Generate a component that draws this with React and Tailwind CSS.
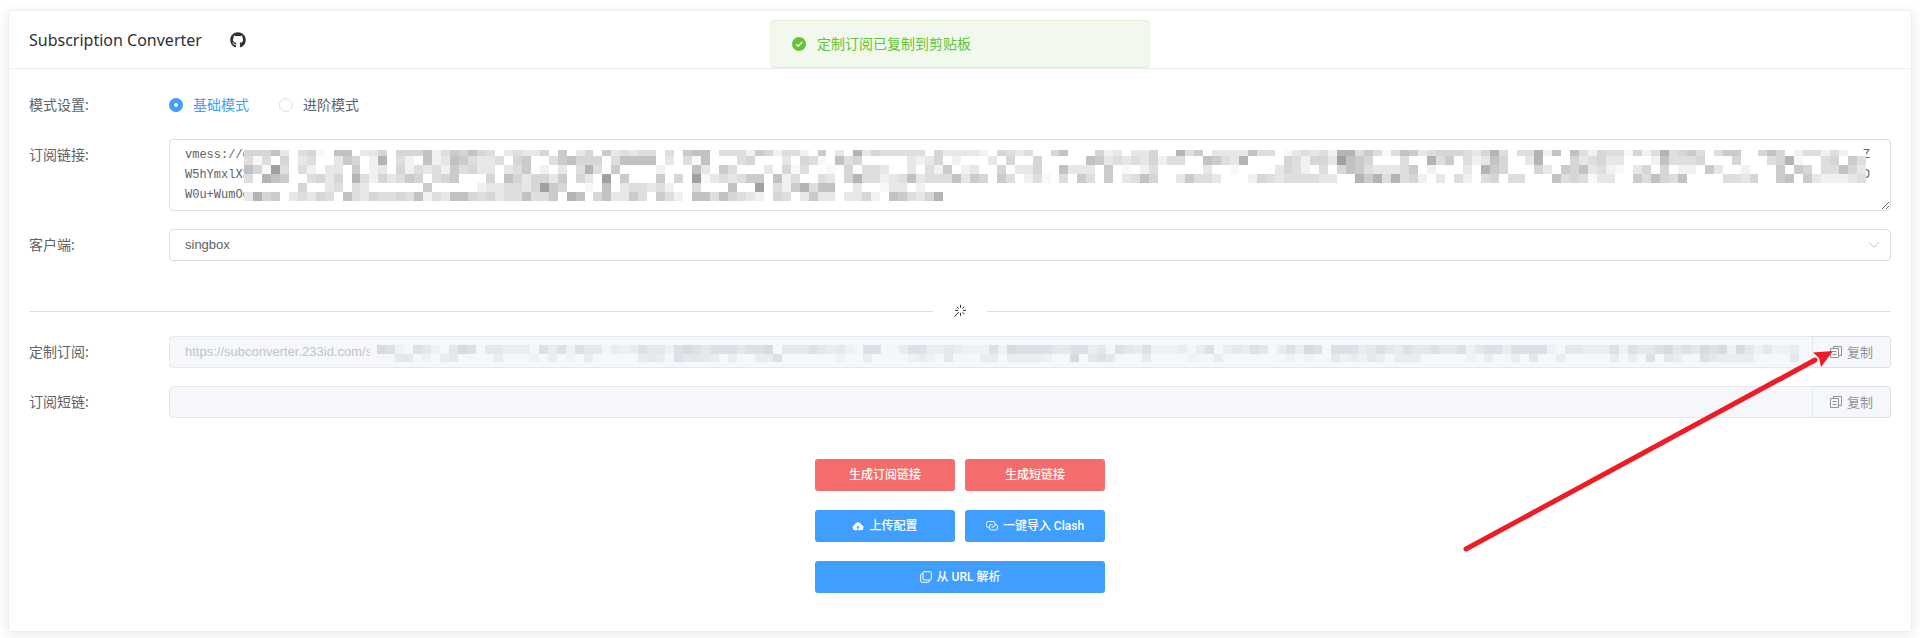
import { useState } from 'react';
import { FaGithub } from 'react-icons/fa';

// Each digit is the darkness of one mosaic cell, 0 is empty
const linkMosaic = [
  '55573045107703350555724657540343350603506343440406770' +
    '44426524420603083544444053333205434005700052303350084603333744013' +
    '434288464147634555435840448270742544152484564046600575024424200',
  '41405034003650280420723764334056004675550477770304170' +
    '00450003054107450000032350200030500500000763434352440076438000054' +
    '255397650004008460423750038000534533000274445000500045810045064',
  '75194042033060230524342645330346020304840600002000730' +
    '64000305140010504430030426023005033500733306010240000030010000354' +
    '204057643334602000308650005306573421035050220630020006065044753',
  '40876004535084253465045600050753553605309060006050913' +
    '43466072400430584423473444736506402410406406034750036443000254344' +
    '443300868484520304204504400074541330064754700004435006706322234',
  '00000050034043000000600000233443596500107034434200400' +
    '07009042684770030013302',
  '38560343540743544547243775453447446087057336406420774' +
    '75432054036330335207643580',
];

const subMosaic = [
  '65205420465044333053525441323544256545554556044454342155103553343222526555544553415' +
    '435222313503435403536505553454354454452455355552044333525445645465626424223',
  '00440203400003000203020300000343054443030033500000020030000232040103303333200604540' +
    '003000021030000001202014232430333000002030030400300000303050431054333310004',
];

const greys = ['', '#f8f8f8', '#f1f1f2', '#e6e7e7', '#dedede', '#d5d6d8', '#cbcbcd', '#c1c2c4', '#b3b4b6', '#9f9fa4'];
const blues = ['', '#f3f6fa', '#eef2f6', '#e9ecf0', '#e4e7eb', '#dde0e8', '#d9dade'];

function Mosaic({ rows, tops, colors, columns, height, background, className }) {
  return (
    <svg
      viewBox={`0 0 ${columns * 9} ${height}`}
      preserveAspectRatio="none"
      shapeRendering="crispEdges"
      aria-hidden="true"
      className={className}
    >
      <rect width={columns * 9} height={height} fill={background} />
      {rows.map((row, r) =>
        row.split('').map((level, c) =>
          level === '0' ? null : (
            <rect key={`${r}-${c}`} x={c * 9} y={tops[r]} width="9" height={tops[r + 1] - tops[r]} fill={colors[level]} />
          )
        )
      )}
    </svg>
  );
}

function StickIcon() {
  return (
    <svg viewBox="0 0 14 14" className="h-3.5 w-3.5" fill="none" stroke="#303133" strokeWidth="1" strokeLinecap="round" aria-hidden="true">
      <path d="M7.500 1.200v2.200M7.500 9.200v2.300M2.600 6.400h2.200M10.300 6.400h2.300M4 3l1.400 1.300M11 3L9.700 4.300M11 9.800L9.700 8.500M5.400 8.400L1.600 12.400" />
    </svg>
  );
}

function DocumentCopyIcon() {
  return (
    <svg viewBox="0 0 12 12" className="h-3 w-3" fill="none" stroke="currentColor" strokeWidth="1" aria-hidden="true">
      <path d="M.5 2.5h8v9h-8zM3.5 2.5v-2h8v9h-3M2.5 5.5h4M2.5 8.5h4" />
    </svg>
  );
}

function CloudIcon() {
  return (
    <svg viewBox="0 0 12 12" className="h-3 w-3" aria-hidden="true">
      <path fill="currentColor" d="M3 10.3A2.7 2.7 0 0 1 2.5 5 3.7 3.7 0 0 1 9.6 5 2.7 2.7 0 0 1 9 10.3z" />
      <path fill="none" stroke="#409eff" strokeWidth="1" d="M6 10.3V6.4M4.5 7.6L6 6.2l1.5 1.4" />
    </svg>
  );
}

function ConnectionIcon() {
  return (
    <svg viewBox="0 0 12 12" className="h-3 w-3" fill="none" stroke="currentColor" strokeWidth="1" aria-hidden="true">
      <path d="M2.500 7.500A2 2 0 0 1 .5 5.500V3.500a2 2 0 0 1 2-2h4.500a2 2 0 0 1 2 2v1.500a2 2 0 0 1-2 2H5.500" />
      <path d="M9.500 4.500a2 2 0 0 1 2 2v1.500a2 2 0 0 1-2 2H5.300a2 2 0 0 1-2-2V6.500a2 2 0 0 1 2-2H6.500" />
    </svg>
  );
}

function CopyIcon() {
  return (
    <svg viewBox="0 0 12 12" className="h-3 w-3" fill="none" stroke="currentColor" strokeWidth="1" aria-hidden="true">
      <rect x="3" y=".7" width="8.3" height="8.3" rx="1" />
      <path d="M3 2.8H1.7a1 1 0 0 0-1 1v6.500a1 1 0 0 0 1 1h6.500a1 1 0 0 0 1-1V9" />
    </svg>
  );
}

function FormItem({ label, htmlFor, children }) {
  return (
    <div className="flex">
      <label htmlFor={htmlFor} className="w-35 shrink-0 leading-8">
        {label}
      </label>
      <div className="relative min-w-0 flex-1">{children}</div>
    </div>
  );
}

function ModeRadio({ value, mode, onChange, children }) {
  const checked = mode === value;
  return (
    <label className={`flex items-center gap-2.5 ${checked ? 'text-[#409eff]' : 'text-[#606266]'}`}>
      <input
        type="radio"
        name="mode"
        value={value}
        checked={checked}
        onChange={() => onChange(value)}
        className="h-3.5 w-3.5 appearance-none rounded-full border border-[#dcdfe6] bg-white checked:border-5 checked:border-[#409eff]"
      />
      {children}
    </label>
  );
}

function CopyField({ id, value, children }) {
  return (
    <div className="flex h-8">
      <input
        id={id}
        value={value}
        disabled
        className="min-w-0 flex-1 rounded-l border border-[#e4e7ed] bg-[#f5f7fa] px-[15px] font-['Liberation_Sans','Noto_Sans_CJK_SC',sans-serif] text-[13px] text-[#c0c4cc]"
      />
      {children}
      <button
        type="button"
        className="flex w-[78px] items-center justify-center gap-[5px] rounded-r border border-l-0 border-[#dcdfe6] bg-[#f5f7fa] text-[13px] text-[#909399]"
      >
        <DocumentCopyIcon />
        复制
      </button>
    </div>
  );
}

function ActionButton({ className, children }) {
  return (
    <button
      type="button"
      className={`flex h-8 items-center justify-center gap-[5px] rounded-[3px] font-['Roboto','Noto_Sans_CJK_SC',sans-serif] text-xs font-medium text-white ${className}`}
    >
      {children}
    </button>
  );
}

export default function App() {
  const [mode, setMode] = useState('basic');
  const [client, setClient] = useState('singbox');

  const links = [
    'vmess://e'.padEnd(233) + 'Z',
    'W5hYmxlX3'.padEnd(233) + 'D',
    'W0u+WumOe',
  ].join('\n');

  return (
    <div className="bg-white px-2 pt-2.5 pb-1.5 font-['Noto_Sans','Noto_Sans_CJK_SC',sans-serif] text-sm text-[#606266]">
      {/* Message */}
      <div
        role="alert"
        className="fixed top-5 left-1/2 z-20 flex h-12 w-[380px] -translate-x-1/2 items-center gap-2.5 rounded border border-[#e1f3d8] bg-[#f0f9eb] pl-5 text-[#67c23a]"
      >
        <svg viewBox="0 0 16 16" className="h-4 w-4" aria-hidden="true">
          <circle cx="8" cy="8" r="7" fill="#67c23a" />
          <path d="M5 8.2l2.2 2.1L11.2 6" fill="none" stroke="#f0f9eb" strokeWidth="1.4" />
        </svg>
        定制订阅已复制到剪贴板
      </div>

      <main className="relative rounded border border-[#ebeef5] shadow-[0_2px_12px_rgba(0,0,0,0.1)]">
        <header className="flex h-[58px] items-center gap-7 border-b border-[#ebeef5] px-5 text-[#303133]">
          <h1 className="text-base">Subscription Converter</h1>
          <a href="#github" aria-label="GitHub">
            <FaGithub className="h-4 w-4" />
          </a>
        </header>

        <form className="flex flex-col px-5 pt-5 pb-[38px]" onSubmit={(e) => e.preventDefault()}>
          <div className="flex flex-col gap-[18px]">
            <div className="flex" role="radiogroup" aria-labelledby="mode-label">
              <span id="mode-label" className="w-35 shrink-0 leading-8">模式设置:</span>
              <div className="flex gap-[30px]">
                <ModeRadio value="basic" mode={mode} onChange={setMode}>基础模式</ModeRadio>
                <ModeRadio value="advanced" mode={mode} onChange={setMode}>进阶模式</ModeRadio>
              </div>
            </div>

            <FormItem label="订阅链接:" htmlFor="links">
              <textarea
                id="links"
                defaultValue={links}
                rows={3}
                wrap="off"
                spellCheck={false}
                className="block h-[72px] w-full resize-y overflow-hidden rounded border border-[#dcdfe6] px-[15px] py-[5px] font-['Liberation_Mono',monospace] text-xs leading-5 outline-none"
              />
              <Mosaic
                rows={linkMosaic}
                tops={[0, 6, 15, 24, 33, 42, 51]}
                colors={greys}
                columns={181}
                height={51}
                background="#fff"
                className="absolute top-[11px] right-[25px] left-[75px] h-[51px] w-[calc(100%-100px)]"
              />
            </FormItem>

            <FormItem label="客户端:" htmlFor="client">
              <select
                id="client"
                value={client}
                onChange={(e) => setClient(e.target.value)}
                className="block h-8 w-full appearance-none rounded border border-[#dcdfe6] bg-white px-[15px] font-['Liberation_Sans','Noto_Sans_CJK_SC',sans-serif] text-[13px] outline-none"
              >
                <option value="singbox">singbox</option>
              </select>
              <svg viewBox="0 0 12 8" className="pointer-events-none absolute top-3 right-[11px] h-2 w-3" fill="none" stroke="#c0c4cc" aria-hidden="true">
                <path d="M1 1.2l5 5 5-5" />
              </svg>
            </FormItem>
          </div>

          <div className="mt-[43px] mb-[18px] flex items-center">
            <span className="h-px flex-1 bg-[#dcdfe6]" />
            <span className="px-5">
              <StickIcon />
            </span>
            <span className="h-px flex-1 bg-[#dcdfe6]" />
          </div>

          <div className="flex flex-col gap-[18px]">
            <FormItem label="定制订阅:" htmlFor="custom">
              <CopyField id="custom" value="https://subconverter.233id.com/s">
                <Mosaic
                  rows={subMosaic}
                  tops={[2, 11, 19]}
                  colors={blues}
                  columns={158}
                  height={20}
                  background="#f5f7fa"
                  className="absolute top-[7px] right-[92px] left-[208px] h-5 w-[calc(100%-300px)]"
                />
                <span className="absolute top-1 left-[201px] h-6 w-[7px] bg-[#f5f7fa]" />
              </CopyField>
            </FormItem>
            <FormItem label="订阅短链:" htmlFor="short">
              <CopyField id="short" value="" />
            </FormItem>
          </div>

          <div className="mt-[41px] flex flex-col items-center gap-[19px]">
            <div className="flex gap-2.5">
              <ActionButton className="w-35 bg-[#f56c6c]">生成订阅链接</ActionButton>
              <ActionButton className="w-35 bg-[#f56c6c]">生成短链接</ActionButton>
            </div>
            <div className="flex gap-2.5">
              <ActionButton className="w-35 bg-[#409eff]">
                <CloudIcon />
                上传配置
              </ActionButton>
              <ActionButton className="w-35 bg-[#409eff]">
                <ConnectionIcon />
                一键导入 Clash
              </ActionButton>
            </div>
            <ActionButton className="w-[290px] bg-[#409eff]">
              <CopyIcon />
              从 URL 解析
            </ActionButton>
          </div>
        </form>

        {/* Arrow to the copy button */}
        <svg
          viewBox="0 0 372 206"
          className="pointer-events-none absolute right-[77px] bottom-[78px] h-[206px] w-[372px]"
          aria-hidden="true"
        >
          <path d="M4 202L353 13" stroke="#ee1c25" strokeWidth="5" strokeLinecap="round" />
          <path d="M371 4L351 5.500L357 11 359 20z" fill="#ee1c25" />
        </svg>
      </main>
    </div>
  );
}
